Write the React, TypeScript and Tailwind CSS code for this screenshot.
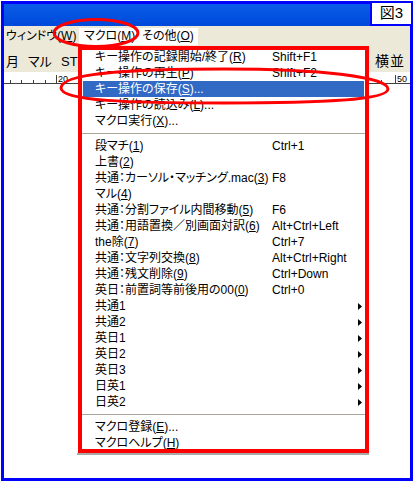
type Item =
  | { sep: true }
  | { sep?: false; label: string; key?: string; mn?: string; tail?: string; shortcut?: string; sub?: boolean; active?: boolean };

const items: Item[] = [
  { label: "キー操作の記録開始/終了", mn: "R", shortcut: "Shift+F1" },
  { label: "キー操作の再生", mn: "P", shortcut: "Shift+F2" },
  { label: "キー操作の保存", mn: "S", tail: "...", active: true },
  { label: "キー操作の読込み", mn: "L", tail: "..." },
  { label: "マクロ実行", mn: "X", tail: "..." },
  { sep: true },
  { label: "段マチ", mn: "1", shortcut: "Ctrl+1" },
  { label: "上書", mn: "2" },
  { label: "共通：カーソル・マッチング.mac", mn: "3", shortcut: "F8" },
  { label: "マル", mn: "4" },
  { label: "共通：分割ファイル内間移動", mn: "5", shortcut: "F6" },
  { label: "共通：用語置換／別画面対訳", mn: "6", shortcut: "Alt+Ctrl+Left" },
  { label: "the除", mn: "7", shortcut: "Ctrl+7" },
  { label: "共通：文字列交換", mn: "8", shortcut: "Alt+Ctrl+Right" },
  { label: "共通：残文削除", mn: "9", shortcut: "Ctrl+Down" },
  { label: "英日：前置詞等前後用の00", mn: "0", shortcut: "Ctrl+0" },
  { label: "共通1", sub: true },
  { label: "共通2", sub: true },
  { label: "英日1", sub: true },
  { label: "英日2", sub: true },
  { label: "英日3", sub: true },
  { label: "日英1", sub: true },
  { label: "日英2", sub: true },
  { sep: true },
  { label: "マクロ登録", mn: "E", tail: "..." },
  { label: "マクロヘルプ", mn: "H" },
];

function Mn({ c }: { c: string }) {
  return (
    <>
      (<u>{c}</u>)
    </>
  );
}

function MenuRow({ item }: { item: Item }) {
  if (item.sep) {
    return (
      <div className="h-[9px] flex items-center -mx-px">
        <div className="h-px w-full bg-[#aca899]" />
      </div>
    );
  }
  return (
    <div
      className={
        "h-[16px] flex items-center pl-[12px] whitespace-nowrap " +
        (item.active ? "bg-[#316ac5] text-white" : "text-black")
      }
    >
      <span className="w-[177px] shrink-0">
        {item.label}
        {item.mn && <Mn c={item.mn} />}
        {item.tail}
      </span>
      {item.shortcut && <span>{item.shortcut}</span>}
      {item.sub && (
        <svg width="4" height="7" className="ml-auto mr-[2px]">
          <path d="M0 0L4 3.5L0 7Z" fill="#000" />
        </svg>
      )}
    </div>
  );
}

export default function App() {
  return (
    <div className="relative w-[416px] h-[485px] bg-white overflow-hidden font-['Liberation_Sans','Noto_Sans_CJK_JP',sans-serif] [font-feature-settings:'palt']">
      {/* window frame */}
      <div className="ml-px mt-px w-[412px] h-[480px] border-[3px] border-[#0000ff] flex flex-col">
        <div className="h-[22px] bg-linear-to-b from-[#0a5ce8] to-[#0049da]" />
        <div className="h-[19px] bg-[#ece9d8] flex text-[12px] leading-[17px]">
          <div className="w-[75px] mt-[2px] h-[17px] pl-[2px]">
            ウィンドウ<Mn c="W" />
          </div>
          <div className="w-[60px] mt-[2px] h-[17px] pl-[5px] bg-white">
            マクロ<Mn c="M" />
          </div>
          <div className="w-[59px] mt-[2px] h-[17px] pl-[3px] bg-white">
            その他<Mn c="O" />
          </div>
        </div>
        <div className="h-[27px] bg-[#ece9d8] flex items-center pt-[6px] pl-[2px] pr-[5px] text-[13px] text-black">
          <span className="w-[22px]">月</span>
          <span className="w-[33px]">マル</span>
          <span>ST</span>
          <span className="ml-auto text-[14px] tracking-[1px]">横並</span>
        </div>
        <svg width="406" height="14" className="shrink-0">
          <line x1="0" y1="11.5" x2="406" y2="11.5" stroke="#404040" />
          {[6, 17, 29, 41, 377].map((x) => (
            <line key={x} x1={x + 0.5} y1="8" x2={x + 0.5} y2="11" stroke="#404040" />
          ))}
          <line x1="52.5" y1="3" x2="52.5" y2="11" stroke="#404040" />
          <line x1="391.5" y1="3" x2="391.5" y2="11" stroke="#404040" />
          <text x="54" y="10" fontSize="9" fill="#000" fontFamily="Liberation Sans, sans-serif">20</text>
          <text x="393" y="10" fontSize="9" fill="#000" fontFamily="Liberation Sans, sans-serif">50</text>
        </svg>
        <div className="flex-1 bg-white" />
      </div>

      {/* figure label */}
      <div className="absolute left-[370px] top-px w-[43px] h-[25px] bg-white border-2 border-[#0000ff] flex items-center justify-center text-[15px] text-black">
        図3
      </div>

      {/* dropdown menu */}
      <div className="absolute left-[78px] top-[46px] w-[291px] h-[407px] bg-white px-[5px] pt-[3px] text-[12px] leading-[16px]">
        {items.map((it, i) => (
          <MenuRow key={i} item={it} />
        ))}
      </div>
      <div className="absolute left-[77px] top-[453px] w-[292px] h-[2px] bg-[#a8a8a8]" />
      <div className="absolute left-[78px] top-[46px] w-[291px] h-[407px] border-4 border-[#ff0000]" />

      {/* annotation ellipses */}
      <svg className="absolute inset-0 pointer-events-none" width="416" height="485">
        <ellipse cx="96" cy="33" rx="42" ry="13.5" fill="none" stroke="#ff0000" strokeWidth="3" />
        <path
          d="M61 88 C61 73 130 69 224 69 C322 69 388 77 388 89 C388 100 322 103 224 103 C130 103 61 101 61 88 Z"
          fill="none"
          stroke="#ff0000"
          strokeWidth="3"
        />
      </svg>
    </div>
  );
}
